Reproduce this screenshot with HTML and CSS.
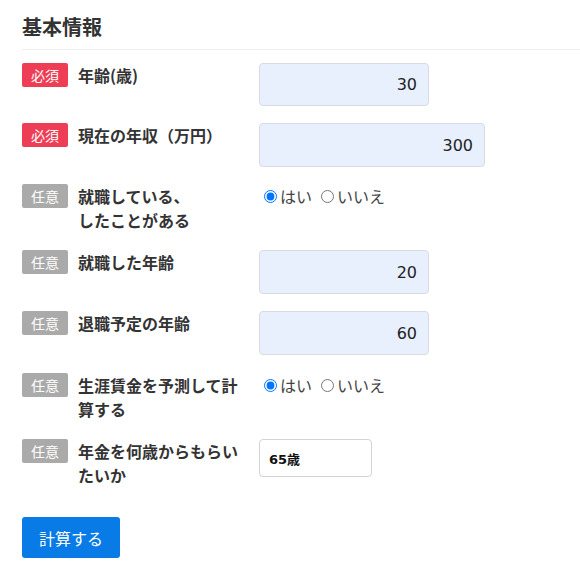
FILE: index.html
```html
<!DOCTYPE html>
<html lang="ja">
<head>
<meta charset="utf-8">
<title>基本情報</title>
<link rel="stylesheet" href="styles.css">
</head>
<body>
<div class="wrap">
  <h2 class="title">基本情報</h2>
  <form class="form">
    <div class="row">
      <span class="badge req">必須</span>
      <span class="label">年齢(歳)</span>
      <input class="num w170 h43" type="text" value="30">
    </div>
    <div class="row">
      <span class="badge req">必須</span>
      <span class="label">現在の年収（万円）</span>
      <input class="num w226" type="text" value="300">
    </div>
    <div class="row loose">
      <span class="badge opt">任意</span>
      <span class="label">就職している、<br>したことがある</span>
      <div class="radios">
        <label class="choice"><input type="radio" name="r1" checked>はい</label>
        <label class="choice"><input type="radio" name="r1">いいえ</label>
      </div>
    </div>
    <div class="row">
      <span class="badge opt">任意</span>
      <span class="label">就職した年齢</span>
      <input class="num w170" type="text" value="20">
    </div>
    <div class="row loose">
      <span class="badge opt">任意</span>
      <span class="label">退職予定の年齢</span>
      <input class="num w170" type="text" value="60">
    </div>
    <div class="row loose">
      <span class="badge opt">任意</span>
      <span class="label">生涯賃金を予測して計算する</span>
      <div class="radios">
        <label class="choice"><input type="radio" name="r2" checked>はい</label>
        <label class="choice"><input type="radio" name="r2">いいえ</label>
      </div>
    </div>
    <div class="row">
      <span class="badge opt">任意</span>
      <span class="label">年金を何歳からもらいたいか</span>
      <input class="age" type="text" value="65歳">
    </div>
    <button class="btn" type="button">計算する</button>
  </form>
</div>
</body>
</html>
```

FILE: styles.css
```css
html, body {
  margin: 0;
  padding: 0;
  background: #fff;
}
body {
  font-family: "Noto Sans CJK JP", "Noto Sans", sans-serif;
  color: #333;
}
.wrap {
  padding-left: 22px;
}
.title {
  margin: 0;
  padding-top: 12px;
  padding-bottom: 7px;
  font-size: 20px;
  line-height: 30px;
  font-weight: bold;
  color: #333;
  border-bottom: 1px solid #eceef0;
}
.form {
  margin-top: 13px;
}
.row {
  display: flex;
  align-items: flex-start;
  margin-bottom: 17px;
}
.row.loose {
  margin-bottom: 18px;
}
.badge {
  flex: 0 0 46px;
  height: 24px;
  line-height: 24px;
  text-align: center;
  font-size: 14px;
  color: #fff;
  border-radius: 2px;
  margin-right: 10px;
}
.badge.req {
  background: #ee3e56;
}
.badge.opt {
  background: #aaaaaa;
}
.label {
  flex: 0 0 170px;
  margin-right: 11px;
  font-size: 16px;
  line-height: 24px;
  font-weight: bold;
  color: #333;
}
.num {
  box-sizing: border-box;
  height: 44px;
  margin: 0;
  padding: 0 11px 0 8px;
  border: 1px solid #d9dbe0;
  border-radius: 4px;
  background: #e8f0fe;
  text-align: right;
  font-family: "DejaVu Sans", sans-serif;
  font-size: 16px;
  color: #222;
  outline: none;
}
.h43 {
  height: 43px;
}
.w170 {
  width: 170px;
}
.w226 {
  width: 226px;
}
.radios {
  display: flex;
  align-items: center;
  height: 24px;
  font-size: 16px;
  color: #444;
}
.choice {
  display: flex;
  align-items: center;
  margin-right: 4px;
}
.choice input {
  margin: 1px 3px 0 5px;
}
.age {
  box-sizing: border-box;
  width: 113px;
  height: 38px;
  margin: 0;
  padding: 0 9px;
  border: 1px solid #d4d4d4;
  border-radius: 4px;
  background: #fff;
  font-family: "DejaVu Sans", "Noto Sans CJK JP", sans-serif;
  font-size: 13px;
  font-weight: bold;
  color: #111;
  outline: none;
}
.btn {
  display: block;
  margin-top: 30px;
  width: 98px;
  height: 41px;
  padding: 0;
  border: none;
  border-radius: 3px;
  background: #087be6;
  color: #fff;
  font-family: "Noto Sans CJK JP", sans-serif;
  font-size: 16px;
  cursor: pointer;
}
```
